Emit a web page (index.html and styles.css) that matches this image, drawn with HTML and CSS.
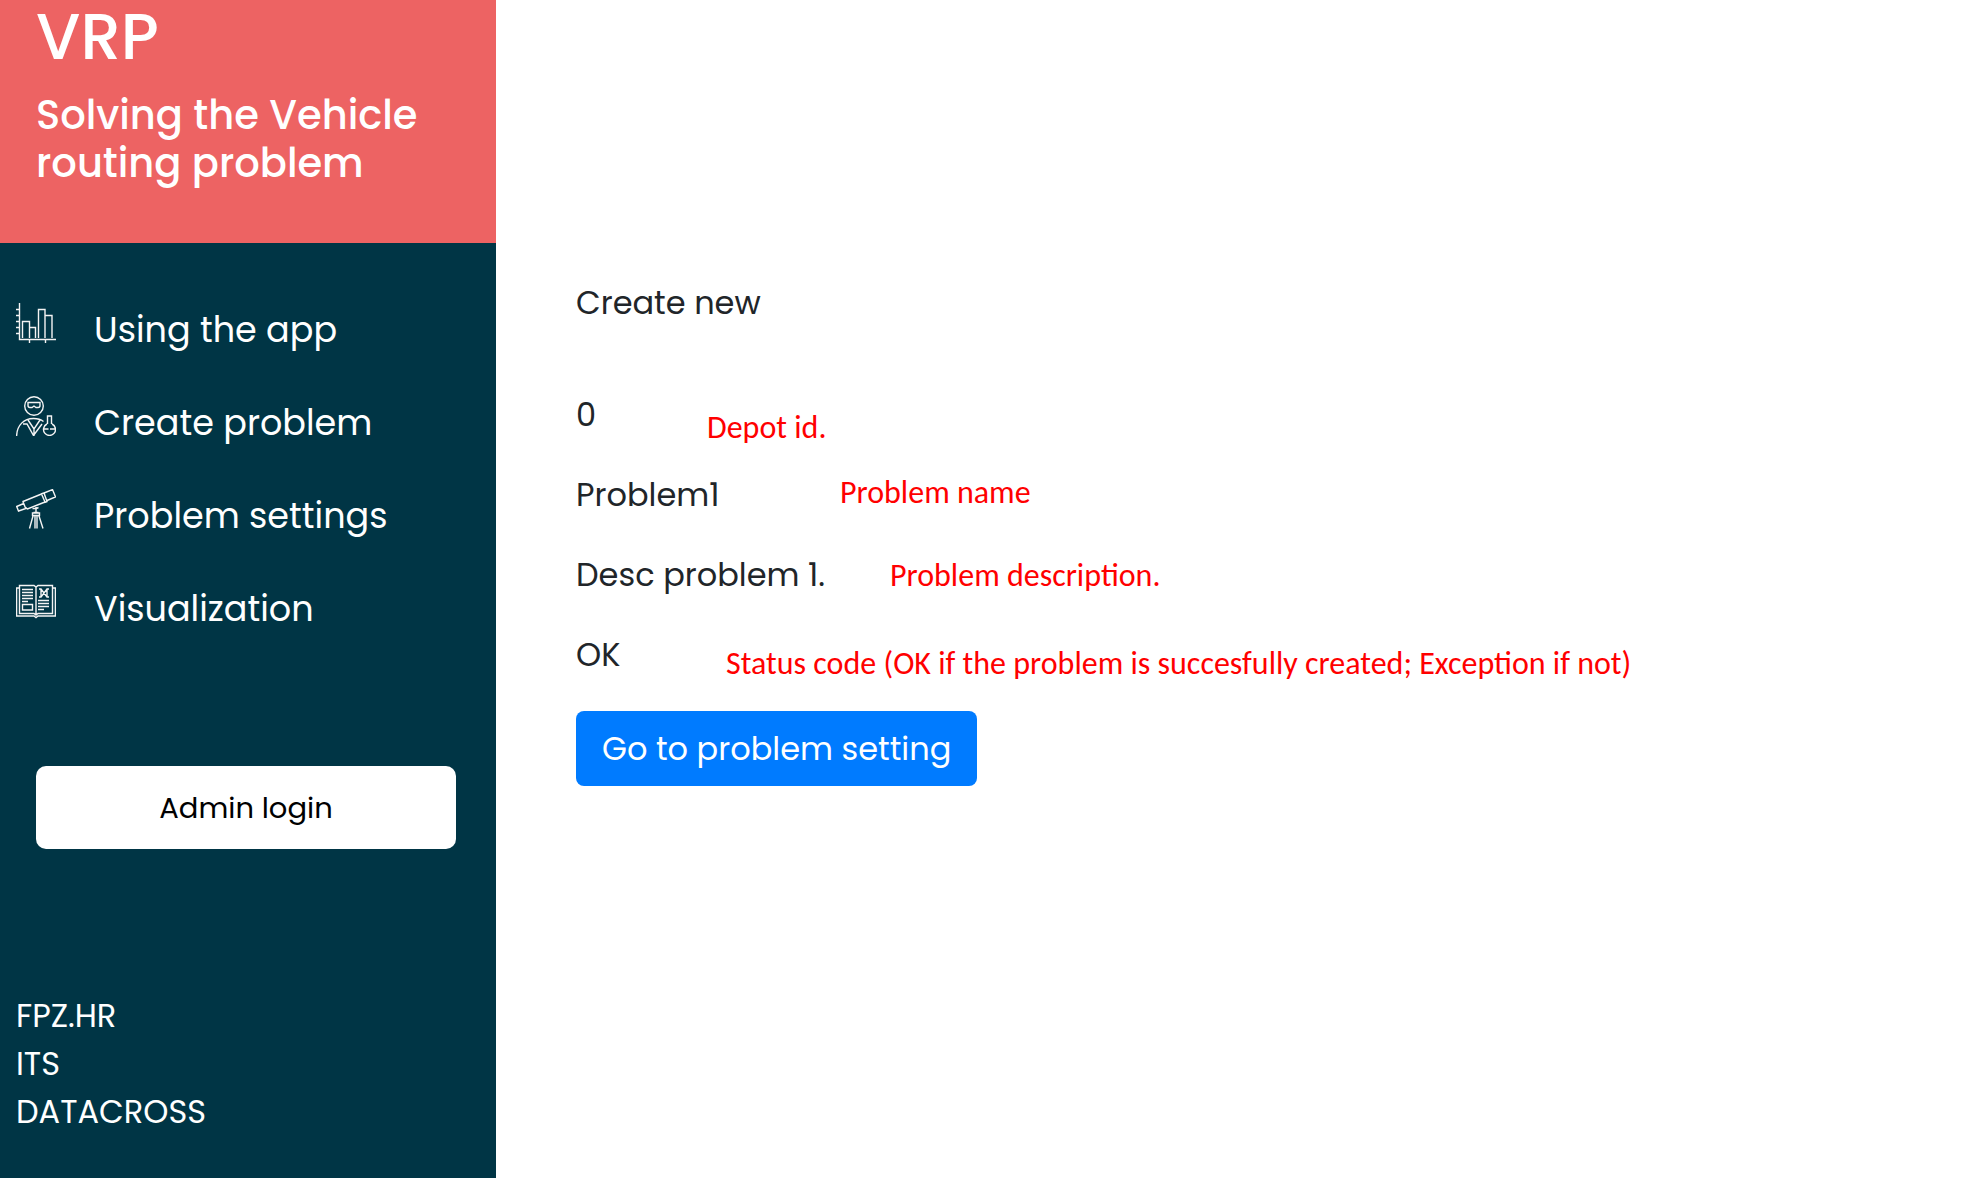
FILE: index.html
```html
<!DOCTYPE html>
<html lang="en">
<head>
<meta charset="utf-8">
<meta name="viewport" content="width=device-width, initial-scale=1">
<title>VRP</title>
<link rel="stylesheet" href="styles.css">
</head>
<body>
<div class="layout">
  <aside class="sidebar">
    <header class="brand">
      <h1 class="brand-title">VRP</h1>
      <h2 class="brand-subtitle">Solving the Vehicle routing problem</h2>
    </header>
    <nav class="menu">
      <a class="menu-item" href="#using">
        <svg class="menu-icon" viewBox="0 0 40 40" aria-hidden="true">
          <path d="M3.500 0v36.500H40M0 6.500h3M0 12.500h3M0 18.500h3M0 24.500h3M0 30.500h3M13.500 36v4M29.500 36v4"/>
          <path d="M6.500 35V18.500h7V35M13.500 24.500h6V35M22.500 35V6.500h6.500V35M29 12.500h7V35"/>
        </svg>
        <span>Using the app</span>
      </a>
      <a class="menu-item" href="#create">
        <svg class="menu-icon" viewBox="0 0 40 40" aria-hidden="true">
          <circle cx="18" cy="10" r="9.300"/>
          <path d="M12 6.500h12v3c0 1.500-.5 2-2 2h-2l-2-1.500-2 1.500h-2c-1.500 0-2-.5-2-2z"/>
          <path d="M.6 40C1 29 8 22.500 17.500 22.500c4 0 7.500 1 10 3M7 28h4l6.500 11.500L26 28M12 24l6 9 6-9M18 33v7"/>
          <path d="M31.500 28v-8h4v8M31 20h5M31 28a6 6 0 1 0 5 0M27.500 33h5M34 33h5"/>
        </svg>
        <span>Create problem</span>
      </a>
      <a class="menu-item" href="#settings">
        <svg class="menu-icon" viewBox="0 1 40 40" aria-hidden="true">
          <path d="M.7 18.500l7-3 2 5-7.200 2.500zM7.500 15.500l-.5-2L25.500 6l3.500 8-17.500 7-1.800-1.500M25 6l3-1 3 8.500-2.500 1M28 5l8.500-3.400L39.500 9 31 12.500"/>
          <path d="M16.500 20.500h4l2-1M20 19v6M17.500 24.500h5M16.500 27.500v-2.500h7v2.500zM17 28l-3.500 12.500M19 28v12.500M21 28v12.500M23 28l4 12.500"/>
        </svg>
        <span>Problem settings</span>
      </a>
      <a class="menu-item" href="#visualization">
        <svg class="menu-icon" viewBox="0 1 40 40" aria-hidden="true">
          <path d="M3.500 4.500H18l2 1.500 2-1.500h14.500v28H22L20 34l-2-1.500H3.500zM3 7H.6v28H18l2 1.500 2-1.500h17.400V7H37M20 6v28"/>
          <path d="M6 8.500h11M6 11.500h11M6 14.500h11M6 17.500h11M6 20.500h6M6.500 23.500h10v5.500h-10zM22 19.500h11M22 22.500h11M22 25.500h11M22 28.500h6"/>
          <path d="M23 8h2l6 8h2M23 16h2l6-8h2M25 8v8M31 8v8"/>
        </svg>
        <span>Visualization</span>
      </a>
    </nav>
    <button class="admin-login" type="button">Admin login</button>
    <footer class="links">
      <a href="#fpz">FPZ.HR</a>
      <a href="#its">ITS</a>
      <a href="#datacross">DATACROSS</a>
    </footer>
  </aside>
  <main class="content">
    <p class="heading">Create new</p>
    <p class="row">0<span class="note note-depot">Depot id.</span></p>
    <p class="row">Problem1<span class="note note-name">Problem name</span></p>
    <p class="row">Desc problem 1.<span class="note note-description">Problem description.</span></p>
    <p class="row">OK<span class="note note-status">Status code (OK if the problem is succesfully created; Exception if not)</span></p>
    <button class="go" type="button">Go to problem setting</button>
  </main>
</div>
</body>
</html>
```
FILE: styles.css
```css
* {
  box-sizing: border-box;
}

body {
  margin: 0;
  background: #fff;
  color: #212529;
  font-family: "Poppins", "Inter", sans-serif;
  font-size: 32px;
  line-height: 48px;
}

h1, h2, p {
  margin: 0;
  font-weight: 500;
}

a {
  color: #fff;
  text-decoration: none;
}

.layout {
  display: flex;
  min-height: 100vh;
}

.sidebar {
  display: flex;
  flex: 0 0 496px;
  flex-direction: column;
  background: #003545;
}

.brand {
  padding: 0 36px 56px;
  background: #ed6363;
  color: #fff;
}

.brand-title {
  margin-bottom: 17px;
  font-size: 64px;
  line-height: 74px;
}

.brand-subtitle {
  font-size: 40px;
}

.menu {
  display: flex;
  flex-direction: column;
  padding: 40px 16px 0;
  font-size: 35px;
}

.menu-item {
  display: flex;
  align-items: center;
  gap: 38px;
  height: 93px;
}

.menu-icon {
  width: 40px;
  height: 40px;
  margin-bottom: 14px;
  fill: none;
  stroke: #f4f4f4;
  stroke-width: 1.4;
}

.admin-login {
  height: 83px;
  margin: 111px 40px 0 36px;
  border: 0;
  border-radius: 10px;
  background: #fff;
  color: #000;
  font: inherit;
  font-size: 29px;
}

.links {
  display: flex;
  flex-direction: column;
  align-items: flex-start;
  padding: 143px 16px 40px;
}

.content {
  flex: 1;
  padding: 279px 80px 40px;
}

.heading {
  margin-bottom: 64px;
  font-weight: 400;
}

.row {
  position: relative;
  margin-bottom: 32px;
  font-weight: 400;
}

/* Red remarks laid over the result rows */
.note {
  position: absolute;
  color: #f00;
  font-family: "Calibri", "Carlito", "Lato", sans-serif;
  font-size: 32px;
  white-space: nowrap;
}

.note-depot {
  top: 13px;
  left: 131px;
}

.note-name {
  top: -2px;
  left: 264px;
}

.note-description {
  top: 1px;
  left: 314px;
}

.note-status {
  top: 9px;
  left: 150px;
}

.go {
  height: 75px;
  padding: 0 26px;
  border: 0;
  border-radius: 8px;
  background: #007bff;
  color: #fff;
  font: inherit;
}
```
